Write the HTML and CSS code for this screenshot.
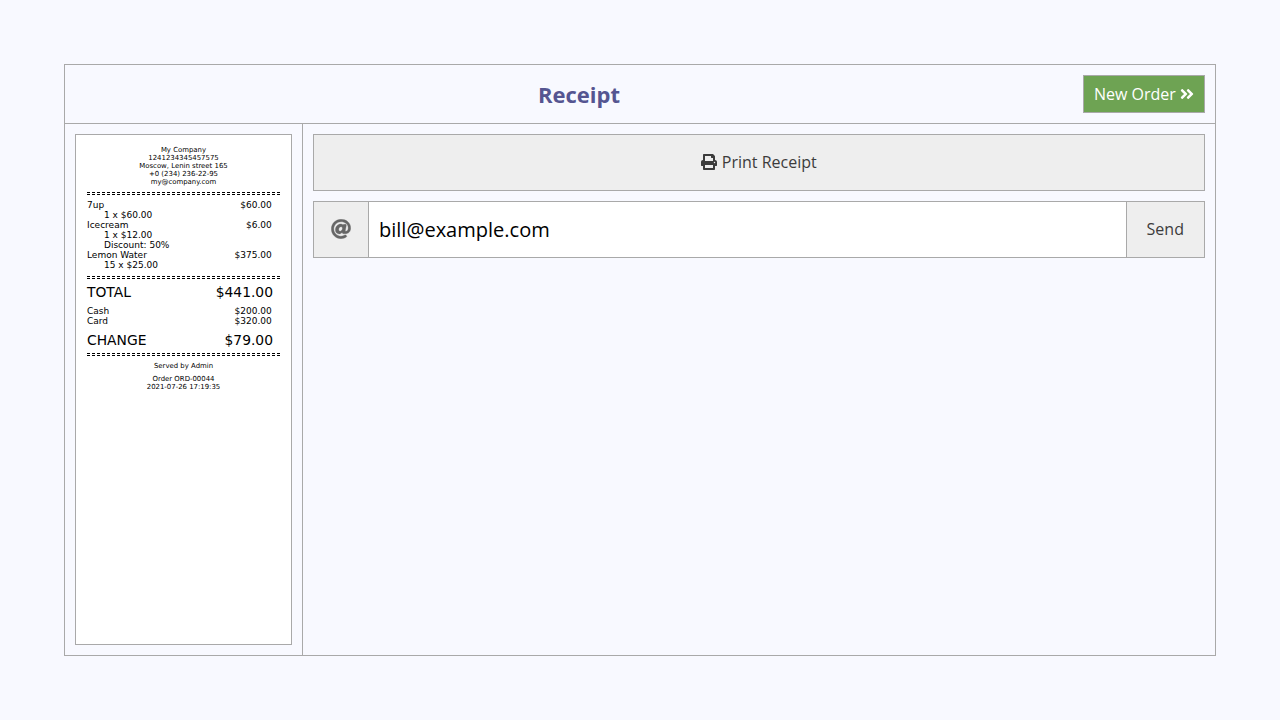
FILE: index.html
```html
<!DOCTYPE html>
<html lang="en">
<head>
<meta charset="utf-8">
<title>Receipt</title>
<link rel="stylesheet" href="styles.css">
</head>
<body>
<div class="screen">
  <header class="header">
    <h1 class="title">Receipt</h1>
    <button class="new-order"><span>New Order</span>
      <svg class="icon-next" viewBox="0 0 448 512"><path fill="currentColor" d="M224.3 273l-136 136c-9.4 9.4-24.6 9.4-33.9 0l-22.6-22.6c-9.4-9.4-9.4-24.6 0-33.9l96.4-96.4-96.4-96.4c-9.4-9.4-9.4-24.6 0-33.9L54.3 103c9.4-9.4 24.6-9.4 33.9 0l136 136c9.5 9.4 9.5 24.6.1 34zm192-34l-136-136c-9.4-9.4-24.6-9.4-33.9 0l-22.6 22.6c-9.4 9.4-9.4 24.6 0 33.9l96.4 96.4-96.4 96.4c-9.4 9.4-9.4 24.6 0 33.9l22.6 22.6c9.4 9.4 24.6 9.4 33.9 0l136-136c9.4-9.2 9.4-24.4 0-33.8z"/></svg>
    </button>
  </header>
  <main class="content">
    <aside class="preview">
      <div class="receipt">
        <div class="company">
          <div>My Company</div>
          <div>1241234345457575</div>
          <div>Moscow, Lenin street 165</div>
          <div>+0 (234) 236-22-95</div>
          <div>my@company.com</div>
        </div>
        <div class="divider"></div>
        <div class="lines">
          <div class="row"><span>7up</span><span>$60.00</span></div>
          <div class="detail">1 x $60.00</div>
          <div class="row"><span>Icecream</span><span>$6.00</span></div>
          <div class="detail">1 x $12.00</div>
          <div class="detail">Discount: 50%</div>
          <div class="row"><span>Lemon Water</span><span>$375.00</span></div>
          <div class="detail">15 x $25.00</div>
        </div>
        <div class="divider"></div>
        <div class="row total"><span>TOTAL</span><span>$441.00</span></div>
        <div class="payments">
          <div class="row"><span>Cash</span><span>$200.00</span></div>
          <div class="row"><span>Card</span><span>$320.00</span></div>
        </div>
        <div class="row total change"><span>CHANGE</span><span>$79.00</span></div>
        <div class="divider"></div>
        <div class="served">Served by Admin</div>
        <div class="order">
          <div>Order ORD-00044</div>
          <div>2021-07-26 17:19:35</div>
        </div>
      </div>
    </aside>
    <section class="actions">
      <button class="print">
        <svg class="icon-print" viewBox="0 0 512 512"><path fill="currentColor" d="M448 192V77.25c0-8.49-3.37-16.62-9.37-22.63L393.37 9.37c-6-6-14.14-9.37-22.63-9.37H96C78.33 0 64 14.33 64 32v160c-35.35 0-64 28.65-64 64v112c0 8.84 7.16 16 16 16h48v96c0 17.67 14.33 32 32 32h320c17.67 0 32-14.33 32-32v-96h48c8.84 0 16-7.16 16-16V256c0-35.35-28.65-64-64-64zm-64 256H128v-96h256v96zm0-224H128V64h192v48c0 8.84 7.16 16 16 16h48v96zm48 72c-13.25 0-24-10.75-24-24 0-13.26 10.75-24 24-24s24 10.74 24 24c0 13.25-10.75 24-24 24z"/></svg>
        <span>Print Receipt</span>
      </button>
      <div class="email">
        <span class="at"><svg class="icon-at" viewBox="0 0 512 512"><path fill="currentColor" stroke="currentColor" stroke-width="8" d="M256 8C118.941 8 8 118.919 8 256c0 137.059 110.919 248 248 248 48.154 0 95.342-14.14 135.408-40.223 12.005-7.815 14.625-24.288 5.552-35.372l-10.177-12.433c-7.671-9.371-21.179-11.667-31.373-5.129C325.92 429.757 291.314 440 256 440c-101.458 0-184-82.542-184-184S154.542 72 256 72c100.139 0 184 57.619 184 160 0 38.786-21.093 79.742-58.17 83.693-17.349-.454-16.91-12.857-13.476-30.024l23.433-121.11C394.653 149.75 383.308 136 368.225 136h-44.981a13.518 13.518 0 0 0-13.432 11.993l-.01.092c-14.697-17.901-40.448-21.775-59.971-21.775-74.58 0-137.831 62.234-137.831 151.46 0 65.303 36.785 105.87 96 105.87 26.984 0 57.369-15.637 74.991-38.333 9.522 34.104 40.613 34.103 70.71 34.103C462.609 379.41 504 307.798 504 232 504 95.653 394.023 8 256 8zm-21.68 304.43c-22.249 0-36.07-15.623-36.07-40.771 0-44.993 30.779-72.729 58.63-72.729 22.292 0 35.601 15.241 35.601 40.77 0 45.061-33.875 72.73-58.161 72.73z"/></svg></span>
        <input class="address" type="text" value="bill@example.com">
        <button class="send">Send</button>
      </div>
    </section>
  </main>
</div>
</body>
</html>
```
FILE: styles.css
```css
* { box-sizing: border-box; }
body {
  margin: 0;
  height: 100vh;
  padding: 64px;
  background: #f8f9ff;
  color: #3c3c3c;
  font: 16px/22px "Open Sans", sans-serif;
}
button, input { font: inherit; color: inherit; border-radius: 0; }
.screen {
  height: 592px;
  display: flex;
  flex-direction: column;
  border: 1px solid #a9a9a9;
}
.header {
  display: flex;
  align-items: center;
  height: 59px;
  padding: 0 10px;
  border-bottom: 1px solid #a9a9a9;
}
.title {
  flex: 1;
  margin: 0;
  text-align: center;
  font-size: 22px;
  line-height: 30px;
  color: #555591;
}
.new-order {
  display: flex;
  align-items: center;
  gap: 4px;
  width: 122px;
  height: 38px;
  padding: 0 10px;
  border: 1px solid #a9a9a9;
  background: #6ea353;
  color: #fff;
  white-space: nowrap;
}
.icon-next { width: 14px; height: 16px; }
.content { flex: 1; display: flex; }
.preview {
  width: 238px;
  padding: 10px;
  border-right: 1px solid #a9a9a9;
}
.receipt {
  height: 511px;
  padding: 11px;
  border: 1px solid #a9a9a9;
  background: #fff;
  color: #000;
  font: 9px/10px "DejaVu Sans", sans-serif;
}
.company, .served, .order {
  text-align: center;
  font-size: 6.93px;
  line-height: 8px;
}
.divider {
  height: 3px;
  border-top: 1px dashed #000;
  border-bottom: 1px dashed #000;
}
.company { margin-bottom: 6px; }
.lines { margin: 5px 0 6px; }
.row {
  display: flex;
  justify-content: space-between;
  padding-right: 8.3px;
}
.detail { padding-left: 17px; }
.total {
  margin-top: 5px;
  padding-right: 7px;
  font-size: 13.86px;
  line-height: 16px;
}
.payments { margin-top: 6px; }
.change { margin: 6px 0 5px; }
.served { margin-top: 6px; }
.order { margin-top: 5px; }
.actions { flex: 1; padding: 10px; }
.print {
  display: flex;
  align-items: center;
  justify-content: center;
  gap: 4.5px;
  width: 100%;
  height: 57px;
  padding: 0 0 2px;
  border: 1px solid #a9a9a9;
  background: #eee;
}
.icon-print { width: 16px; height: 16px; }
.email {
  display: flex;
  height: 57px;
  margin-top: 10px;
  border: 1px solid #a9a9a9;
}
.at {
  display: flex;
  align-items: center;
  justify-content: center;
  width: 55px;
  padding-bottom: 1px;
  border-right: 1px solid #a9a9a9;
  background: #eee;
  color: #666;
}
.icon-at { width: 20px; height: 20px; }
.address {
  flex: 1;
  padding: 1px 10px 0;
  border: 0;
  background: #fff;
  color: #000;
  font-size: 20.05px;
}
.send {
  width: 78px;
  padding: 0 0.5px 2px 0;
  border: 0;
  border-left: 1px solid #a9a9a9;
  background: #eee;
}
```
